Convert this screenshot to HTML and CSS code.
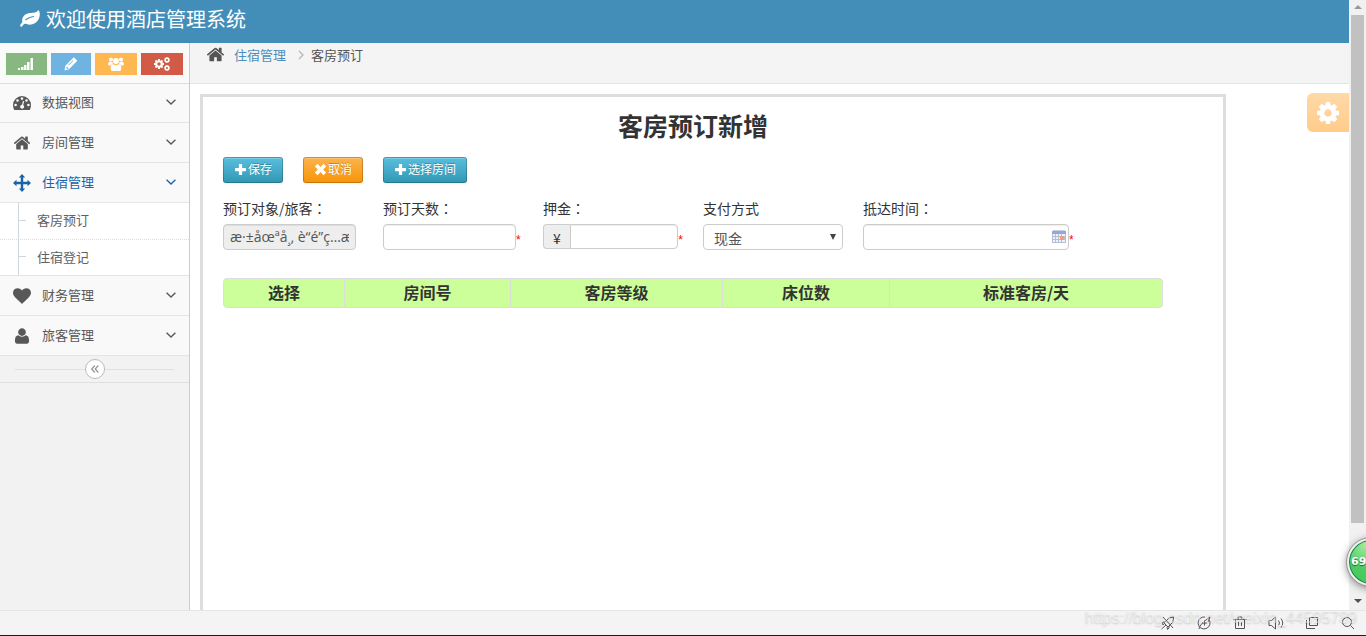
FILE: index.html
```html
<!DOCTYPE html>
<html lang="zh-CN">
<head>
<meta charset="utf-8">
<title>酒店管理系统</title>
<link rel="stylesheet" href="styles.css">
</head>
<body>
<svg class="defs" aria-hidden="true">
  <symbol id="home" viewBox="0 0 1792 1792"><path d="M1472 992v480q0 26-19 45t-45 19h-384v-384h-256v384h-384q-26 0-45-19t-19-45v-480q0-1 .5-3t.5-3l575-474 575 474q1 2 1 6zm223-69l-62 74q-8 9-21 11h-3q-13 0-21-7l-692-577-692 577q-12 8-24 7-13-2-21-11l-62-74q-8-10-7-23.5t11-21.5l719-599q32-26 76-26t76 26l244 204v-195q0-14 9-23t23-9h192q14 0 23 9t9 23v408l219 182q10 8 11 21.5t-7 23.5z"/></symbol>
  <symbol id="cog" viewBox="128 128 1536 1536"><path d="M1152 896q0-106-75-181t-181-75-181 75-75 181 75 181 181 75 181-75 75-181zm512-109v222q0 12-8 23t-20 13l-185 28q-19 54-39 91 35 50 107 138 10 12 10 25t-9 23q-27 37-99 108t-94 71q-12 0-26-9l-138-108q-44 23-91 38-16 136-29 186-7 28-36 28h-222q-14 0-24.5-8.5t-11.5-21.5l-28-184q-49-16-90-37l-141 107q-10 9-25 9-14 0-25-11-126-114-165-168-7-10-7-23 0-12 8-23 15-21 51-66.5t54-70.5q-27-50-41-99l-183-27q-13-2-21-12.5t-8-23.5v-222q0-12 8-23t19-13l186-28q14-46 39-92-40-57-107-138-10-12-10-24 0-10 9-23 26-36 98.5-107.5t94.5-71.5q13 0 26 10l138 107q44-23 91-38 16-136 29-186 7-28 36-28h222q14 0 24.5 8.5t11.5 21.5l28 184q49 16 90 37l142-107q9-9 24-9 13 0 25 10 129 119 165 170 7 8 7 22 0 12-8 23-15 21-51 66.5t-54 70.5q26 50 41 98l183 28q13 2 21 12.5t8 23.5z"/></symbol>
  <symbol id="chevron" viewBox="0 0 10 6"><path d="M.6.7 5 5 9.400.7" fill="none" stroke="currentColor" stroke-width="1.400"/></symbol>
  <symbol id="plus" viewBox="0 0 12 12"><path d="M4.500 1h3v3.500H11v3H7.500V11h-3V7.500H1v-3h3.500z"/></symbol>
  <symbol id="cross" viewBox="0 0 12 12"><path d="M3.200.8 6 3.600 8.800.8l2.400 2.400L8.400 6l2.800 2.800-2.400 2.400L6 8.400l-2.800 2.800L.8 8.800 3.600 6 .8 3.200z"/></symbol>
</svg>
<div class="shell">
  <div class="page">
    <header class="navbar">
      <svg class="leaf" viewBox="0 0 20 17" aria-hidden="true"><path fill="currentColor" fill-rule="evenodd" d="M18.800.5C20.600 3 20 9 16.500 12c-3.500 3-8 3.200-11 1.800-1.500-.5-2.500 1.200-3.500 2.600C1.200 17.200-.2 16 .3 14.900.8 13.700 2.200 13 2.300 12 1.500 8 4 4.500 8.500 3.300c3.500-.8 7-.2 9-2.300.4-.5.9-.9 1.300-.5zM5.800 10.600c2.500-2 4.700-3.100 8.400-3.500V6c-4 .3-6.700 1.500-9.200 3.800z"/></svg>
      <span class="brand">欢迎使用酒店管理系统</span>
    </header>
    <div class="columns">
      <aside class="sidebar">
        <div class="shortcuts">
          <button class="shortcut green" aria-label="统计"><svg viewBox="0 0 16 14"><path d="M0 11h2v2H0zM3 10h2.500v3H3zM6 8h2.500v5H6zM9 5h2.500v8H9zM12.500 1H15v12h-2.500z"/></svg></button>
          <button class="shortcut blue" aria-label="编辑"><svg viewBox="0 0 16 14"><path fill-rule="evenodd" d="m10.800.3 3.500 3.500L6 12.200 1.500 13.500l1-4.900zM3.700 9.600l-.4 1.700.8.800 1.700-.5zM10 3.300 5.200 8l.5.500 4.800-4.700z"/></svg></button>
          <button class="shortcut orange" aria-label="用户"><svg viewBox="0 0 16 14"><circle cx="3" cy="2.500" r="2"/><circle cx="13" cy="2.500" r="2"/><circle cx="8" cy="4" r="2.900"/><path d="M.2 7.500C.2 5.500 1 4.600 2 4.600c1.300.8 2 .5 2.500.4C4.600 6.200 5 7 4.500 7.200 3.500 7.500 3 8.600 3 8.600H1C.5 8.500.2 8 .2 7.500zM15.800 7.500c0-2-.8-2.900-1.800-2.900-1.300.8-2 .5-2.500.4-.1 1.200-.5 2 0 2.200 1 .3 1.500 1.400 1.500 1.400h2c.5-.1.800-.6.800-1.100zM2.700 12c0-3 .8-4.800 2.600-4.800 1.800 1.300 3.600 1.300 5.400 0 1.800 0 2.600 1.800 2.600 4.800 0 1.300-.8 1.900-2 1.900H4.700c-1.200 0-2-.6-2-1.900z"/></svg></button>
          <button class="shortcut red" aria-label="设置"><svg viewBox="0 0 16 14"><use href="#cog" x="0" y="2" width="10" height="10"/><use href="#cog" x="10" y="0" width="6" height="6"/><use href="#cog" x="10" y="8" width="6" height="6"/></svg></button>
        </div>
        <nav class="menu">
          <a class="item" href="#"><svg class="glyph" viewBox="0 0 18 18"><path fill-rule="evenodd" d="M9 2a9 9 0 0 1 9 9c0 1.800-.4 3.500-1.200 5H1.200C.4 14.500 0 12.800 0 11a9 9 0 0 1 9-9zM2.600 9.700a1.300 1.300 0 1 0 0 2.600 1.300 1.300 0 0 0 0-2.600zM4.500 5.200a1.300 1.300 0 1 0 0 2.600 1.300 1.300 0 0 0 0-2.600zM9 3.300a1.300 1.300 0 1 0 0 2.600 1.300 1.300 0 0 0 0-2.600zM13.500 5.200a1.300 1.300 0 1 0 0 2.600 1.300 1.300 0 0 0 0-2.600zM15.400 9.700a1.300 1.300 0 1 0 0 2.600 1.300 1.300 0 0 0 0-2.600zM10 7 9 10.800a2 2 0 1 0 1.200.3l1-3.800z"/></svg><span>数据视图</span><svg class="caret"><use href="#chevron"/></svg></a>
          <a class="item" href="#"><svg class="glyph"><use href="#home"/></svg><span>房间管理</span><svg class="caret"><use href="#chevron"/></svg></a>
          <a class="item active" href="#"><svg class="glyph" viewBox="0 0 18 18"><path d="m9 0 3.200 3.500h-2v4.300h4.300v-2L18 9l-3.500 3.200v-2h-4.300v4.300h2L9 18l-3.200-3.500h2v-4.300H3.500v2L0 9l3.500-3.200v2h4.300V3.500h-2z"/></svg><span>住宿管理</span><svg class="caret"><use href="#chevron"/></svg></a>
          <div class="submenu">
            <a href="#">客房预订</a>
            <a href="#">住宿登记</a>
          </div>
          <a class="item" href="#"><svg class="glyph" viewBox="0 0 1792 1792"><path d="M896 1664q-26 0-44-18l-624-602q-10-8-27.500-26t-55.500-65.500-68-97.500-53.500-121-23.500-138q0-220 127-344t351-124q62 0 126.500 21.500t120 58 95.500 68.500 76 68q36-36 76-68t95.500-68.500 120-58 126.500-21.500q224 0 351 124t127 344q0 221-229 450l-623 600q-18 18-44 18z"/></svg><span>财务管理</span><svg class="caret"><use href="#chevron"/></svg></a>
          <a class="item" href="#"><svg class="glyph" viewBox="0 0 1792 1792"><path d="M1600 1399q0 109-62.500 187t-150.500 78h-982q-88 0-150.500-78t-62.500-187q0-85 8.500-160.500t31.500-152 58.500-131 94-89 134.500-34.500q150 128 377 128t377-128q76 0 134.500 34.500t94 89 58.500 131 31.500 152 8.500 160.500zm-320-887q0 159-112.500 271.500t-271.500 112.500-271.500-112.500-112.500-271.500 112.500-271.500 271.500-112.500 271.500 112.500 112.500 271.500z"/></svg><span>旅客管理</span><svg class="caret"><use href="#chevron"/></svg></a>
        </nav>
        <div class="collapse"><button aria-label="收起菜单"><svg viewBox="0 0 10 10"><path d="M4.800 1.500 1.700 5l3.100 3.500M8.300 1.500 5.200 5l3.100 3.500" fill="none" stroke="currentColor" stroke-width="1.300"/></svg></button></div>
      </aside>
      <main class="content">
        <nav class="breadcrumb"><svg class="crumb-home"><use href="#home"/></svg><a href="#">住宿管理</a><svg class="crumb-sep" viewBox="0 0 6 10"><path d="m1 1 4 4-4 4" fill="none" stroke="currentColor" stroke-width="1.300"/></svg><span>客房预订</span></nav>
        <div class="workspace">
          <section class="panel">
            <form class="booking">
              <h1>客房预订新增</h1>
              <div class="actions">
                <button type="button" class="btn info"><svg><use href="#plus"/></svg>保存</button>
                <button type="button" class="btn warning"><svg><use href="#cross"/></svg>取消</button>
                <button type="button" class="btn info"><svg><use href="#plus"/></svg>选择房间</button>
              </div>
              <div class="fields">
                <div class="field"><label for="guest">预订对象/旅客<span class="colon" lang="zh-TW">：</span></label><div class="control"><input id="guest" type="text" readonly value="æ·±åœªå¸‚ è“é”ç…æ"></div></div>
                <div class="field"><label for="days">预订天数<span class="colon" lang="zh-TW">：</span></label><div class="control"><input id="days" type="text"><span class="required">*</span></div></div>
                <div class="field"><label for="deposit">押金<span class="colon" lang="zh-TW">：</span></label><div class="control"><div class="prepend"><span>¥</span><input id="deposit" type="text"></div><span class="required">*</span></div></div>
                <div class="field"><label for="pay">支付方式</label><div class="control select"><select id="pay"><option>现金</option></select><svg viewBox="0 0 6 6"><path d="M0 0h6L3 6z"/></svg></div></div>
                <div class="field wide"><label for="arrive">抵达时间<span class="colon" lang="zh-TW">：</span></label><div class="control date"><div class="date-box"><input id="arrive" type="text"><svg viewBox="0 0 14 13"><path fill="#b4bfd6" d="M0 1h14v12H0z"/><path fill="#8eaae0" d="M0 1h14v3H0z"/><path fill="#c9cfda" d="M1 0h12v1H1z"/><path fill="#eef3fb" d="M1 4h2v2H1zM4 4h2v2H4zM7 4h2v2H7zM10 4h3v2h-3zM1 7h2v2H1zM4 7h2v2H4zM7 7h1v2H7zM1 10h2v2H1zM4 10h2v2H4zM7 10h2v2H7zM10 10h3v2h-3z"/><path fill="#f0a080" d="M8 6h4v4H8z"/></svg></div><span class="required">*</span></div></div>
              </div>
              <table class="rooms">
                <colgroup><col class="c1"><col class="c2"><col class="c3"><col class="c4"><col></colgroup>
                <thead><tr><th>选择</th><th>房间号</th><th>客房等级</th><th>床位数</th><th>标准客房/天</th></tr></thead>
              </table>
            </form>
          </section>
        </div>
        <button class="settings" aria-label="页面设置"><svg><use href="#cog"/></svg></button>
      </main>
    </div>
  </div>
  <div class="scrollbar"><svg viewBox="0 0 8 4"><path fill="#999" d="m0 4 4-4 4 4z"/></svg><div class="thumb"></div><svg viewBox="0 0 8 4"><path fill="#505050" d="m0 0 4 4 4-4z"/></svg></div>
  <div class="meter">69</div>
</div>
<footer class="statusbar">
  <svg viewBox="0 0 16 16"><path d="M13.500 2 9 3 4 8l4 4 5-5zM5 7 3 7l-1 2 2 .5M9 11v2l-1.500 1.500L7 12M6 10l-4.500 4M3 2l10 11"/></svg>
  <svg viewBox="0 0 16 16"><path d="M13 4.500A6 6 0 1 1 9 2M3 14c0-3 5-8 11-12l-2 5M6 8h5M8.500 5.500v5"/></svg>
  <svg viewBox="0 0 16 16"><path d="M1.500 4.500h13M3.500 4.500v9h9v-9M6.500 7v4M9.500 7v4M6 4V2h4v2"/></svg>
  <svg viewBox="0 0 16 16"><path d="M1 5.500v5h2.500l4 3.500V2l-4 3.500zM10.500 5.500q2 2.500 0 5M13 3.500q3.500 4.500 0 9"/></svg>
  <svg viewBox="0 0 16 16"><path d="M5.500 2.500h8v8h-8zM2.500 5v8.500H11"/></svg>
  <svg viewBox="0 0 16 16"><circle cx="7" cy="7" r="4.500"/><path d="m10.500 10.500 3.500 3.500"/></svg>
  <span class="watermark">https://blog.csdn.net/weixin_44595789</span>
</footer>
</body>
</html>
```
FILE: styles.css
```css
* { box-sizing: border-box; }
body {
  margin: 0;
  height: 100vh;
  display: flex;
  flex-direction: column;
  overflow: hidden;
  background: #fff;
  color: #333;
  font: 13px/20px "Noto Sans CJK SC", sans-serif;
}
svg { fill: currentColor; display: block; flex: none; }
a { text-decoration: none; color: inherit; }
button { font: inherit; border: 0; padding: 0; cursor: pointer; }
.defs { position: absolute; width: 0; height: 0; }
.shell { flex: 1; min-height: 0; display: flex; position: relative; overflow: hidden; }
.page { flex: 1; min-width: 0; display: flex; flex-direction: column; }

.navbar {
  height: 43px;
  flex: none;
  display: flex;
  align-items: center;
  gap: 6px;
  padding: 0 20px 6px;
  background: #438eb9;
  color: #fff;
}
.leaf { width: 20px; height: 17px; }
.brand { font-size: 20px; line-height: 30px; }
.columns { flex: 1; min-height: 0; display: flex; }

.sidebar { width: 190px; flex: none; background: #f2f2f2; border-right: 1px solid #ccc; color: #585858; }
.shortcuts {
  display: grid;
  grid-template-columns: 41fr 40fr 43fr 42fr;
  gap: 4px;
  padding: 10px 6px 8px;
  background: #fafafa;
  border-bottom: 1px solid #ddd;
}
.shortcut { height: 22px; display: flex; align-items: center; justify-content: center; color: #fff; }
.shortcut svg { width: 16px; height: 14px; }
.green { background: #87b87f; }
.blue { background: #6fb3e0; }
.orange { background: #ffb752; }
.red { background: #d15b47; }
.item {
  display: flex;
  align-items: center;
  height: 40px;
  padding: 0 13px;
  background: #f9f9f9;
  border-bottom: 1px solid #e5e5e5;
}
.item span { flex: 1; padding: 0 0 2px 11px; }
.glyph { width: 18px; height: 18px; }
.caret { width: 10px; height: 6px; margin: 0 0 2px; }
.active { color: #1963aa; }
.item:first-child { height: 39px; }
.submenu { background: #fff; border-bottom: 1px solid #e5e5e5; position: relative; color: #616161; }
.submenu::before { content: ""; position: absolute; left: 18px; top: 0; bottom: 0; border-left: 1px solid #ccd7e2; }
.submenu a { display: flex; align-items: center; height: 36px; padding: 0 0 2px 18px; }
.submenu a::before { content: ""; width: 8px; border-top: 1px solid #ccd7e2; margin-right: 11px; }
.submenu a + a { border-top: 1px dotted #ddd; }
.collapse { height: 27px; display: flex; align-items: center; padding: 0 15px; border-bottom: 1px solid #e0e0e0; }
.collapse::before, .collapse::after { content: ""; flex: 1; border-top: 1px solid #e0e0e0; }
.collapse button {
  width: 20px;
  height: 20px;
  border: 1px solid #bbb;
  border-radius: 50%;
  background: #fff;
  color: #999;
  display: flex;
  align-items: center;
  justify-content: center;
}
.collapse svg { width: 10px; height: 10px; }

.content { flex: 1; min-width: 0; display: flex; flex-direction: column; position: relative; }
.breadcrumb {
  height: 41px;
  flex: none;
  display: flex;
  align-items: center;
  padding: 0 16px 17px;
  background: #f4f4f4;
  border-bottom: 1px solid #e5e5e5;
  color: #555;
}
.breadcrumb a { color: #4c8fbd; margin: 0 12px 0 9px; }
.crumb-home { width: 19px; height: 19px; }
.crumb-sep { width: 6px; height: 10px; margin-right: 7px; color: #b2b6bf; }
.workspace { flex: 1; min-height: 0; display: flex; padding: 10px 123px 0 10px; }
.panel { flex: 1; min-width: 0; border: 3px solid #ddd; border-bottom: 0; padding: 0 60px 0 20px; }
h1 { margin: 0; padding-top: 8px; font-size: 25px; line-height: 40px; text-align: center; color: #333; }
.actions { display: flex; gap: 20px; margin: 12px 0 15px; }
.btn {
  height: 26px;
  padding: 0 10px 2px;
  display: flex;
  align-items: center;
  border: 1px solid rgba(0, 0, 0, .2);
  border-radius: 3px;
  color: #fff;
  font-size: 12px;
  text-shadow: 0 -1px 0 rgba(0, 0, 0, .25);
  box-shadow: inset 0 1px 0 rgba(255, 255, 255, .2), 0 1px 2px rgba(0, 0, 0, .05);
}
.btn svg { width: 13px; height: 13px; margin: 1px 1px 0 0; }
.info { background: linear-gradient(#5bc0de, #2f96b4) border-box; }
.warning { background: linear-gradient(#fbb450, #f89406) border-box; }

.fields { display: grid; grid-template-columns: repeat(4, 140px) 1fr; gap: 20px; margin-bottom: 28px; font-size: 14px; }
.field label { display: block; margin-bottom: 6px; white-space: nowrap; }
.colon { font-family: "Noto Sans CJK TC", sans-serif; }
.control { display: flex; align-items: flex-start; height: 26px; }
.field input, .field select {
  width: 133px;
  height: 26px;
  border: 1px solid #ccc;
  border-radius: 4px;
  padding: 0 6px 2px;
  background: #fff;
  color: #555;
  font: 14px/20px "Open Sans", "Noto Sans CJK SC", sans-serif;
  box-shadow: inset 0 1px 1px rgba(0, 0, 0, .075);
}
.field input[readonly] { background: #eee; }
.required { color: #f00; font: 12px/12px "Liberation Sans", sans-serif; padding-top: 10px; }
.prepend { display: flex; width: 136px; }
.prepend span {
  width: 27px;
  border: 1px solid #ccc;
  border-right: 0;
  border-radius: 4px 0 0 4px;
  background: #eee;
  text-align: center;
  line-height: 26px;
  height: 25px;
}
.field .prepend input { flex: 1; width: 0; height: 25px; border-radius: 0 4px 4px 0; }
.select { position: relative; }
.field select { width: 100%; appearance: none; padding: 3px 10px 0; box-shadow: none; }
.select svg { position: absolute; right: 7px; top: 10px; width: 6px; height: 6px; color: #444; pointer-events: none; }
.date-box { position: relative; width: 206px; }
.field .date-box input { width: 100%; display: block; padding-right: 20px; }
.date-box svg { position: absolute; right: 3px; top: 6px; width: 14px; height: 13px; }

.rooms {
  width: 100%;
  table-layout: fixed;
  border: 1px solid #ddd;
  border-radius: 4px;
  border-spacing: 0;
  background: #cf9;
  font-size: 16px;
}
.rooms th { height: 28px; padding: 0 0 2px; line-height: 26px; }
.rooms th + th { border-left: 1px solid #ddd; }
.c1 { width: 120px; }
.c2 { width: 166px; }
.c3 { width: 212px; }
.c4 { width: 167px; }

.settings {
  position: absolute;
  right: 0;
  top: 50px;
  width: 42px;
  height: 39px;
  border-radius: 6px 0 0 6px;
  background: linear-gradient(#ffd9a8, #ffcc8a);
  color: #fff;
  display: flex;
  align-items: center;
  justify-content: center;
}
.settings svg { width: 22px; height: 22px; }

.scrollbar { width: 17px; flex: none; display: flex; flex-direction: column; align-items: center; padding: 5px 0 7px; background: #f1f1f1; }
.scrollbar svg { width: 8px; height: 4px; }
.thumb { width: 13px; height: 85%; margin: 6px 0 auto; background: #c1c1c1; }
.meter {
  position: absolute;
  right: -29px;
  bottom: 24px;
  width: 48px;
  height: 48px;
  padding-left: 2px;
  border: 2px solid #eee;
  border-radius: 50%;
  outline: 1px solid #999;
  background: radial-gradient(circle at 40% 10%, #a8ec9f, #4ccd62 50%, #3fc557);
  box-shadow: inset 0 0 0 1px #16804c, 0 2px 8px rgba(0, 0, 0, .5);
  color: #fff;
  font: bold 11px/44px "DejaVu Sans", sans-serif;
  text-shadow: 0 1px 1px #16643a;
}
.statusbar {
  height: 26px;
  flex: none;
  display: flex;
  align-items: center;
  justify-content: flex-end;
  gap: 20px;
  padding-right: 10px;
  background: #f4f4f4;
  border-top: 1px solid #e5e5e5;
  border-bottom: 1px solid #1b1b24;
  position: relative;
}
.statusbar svg { width: 16px; height: 16px; fill: none; stroke: #555; }
.watermark {
  position: absolute;
  right: 9px;
  top: -3px;
  font: 16px/20px "Liberation Sans", sans-serif;
  color: rgba(255, 255, 255, .5);
  text-shadow: 0 1px 2px rgba(0, 0, 0, .2);
}
```
